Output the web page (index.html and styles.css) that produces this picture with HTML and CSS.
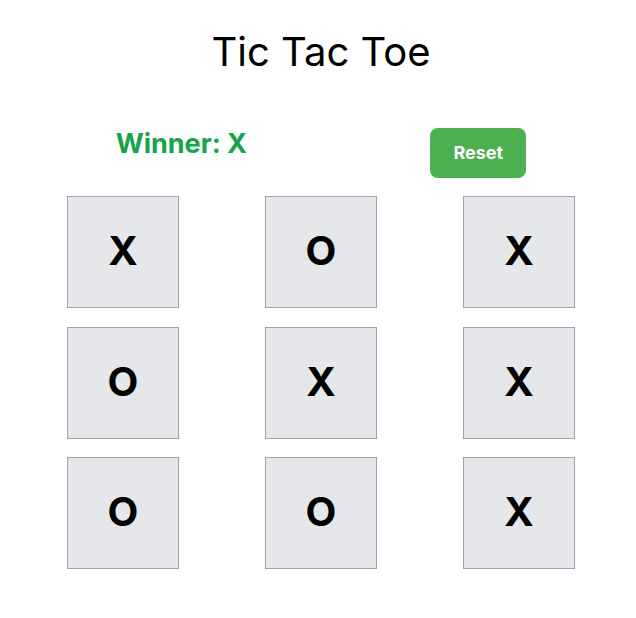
FILE: index.html
```html
<!DOCTYPE html>
<html lang="en">
<head>
<meta charset="utf-8">
<title>Tic Tac Toe</title>
<link rel="stylesheet" href="styles.css">
</head>
<body>
<div class="app">
  <h1 class="title">Tic Tac Toe</h1>
  <div class="status">
    <div class="winner">Winner: X</div>
    <button class="reset">Reset</button>
  </div>
  <div class="board">
    <div class="cell">X</div>
    <div class="cell">O</div>
    <div class="cell">X</div>
    <div class="cell">O</div>
    <div class="cell">X</div>
    <div class="cell">X</div>
    <div class="cell">O</div>
    <div class="cell">O</div>
    <div class="cell">X</div>
  </div>
</div>
</body>
</html>
```
FILE: styles.css
```css
html, body {
  margin: 0;
  padding: 0;
  background: #ffffff;
}
body {
  font-family: Inter, "Liberation Sans", sans-serif;
  color: #000;
}
.app {
  padding: 0 18px 0 24px;
  display: flex;
  flex-direction: column;
}
.title {
  margin: 28px 0 0;
  font-size: 40px;
  font-weight: 400;
  line-height: 48px;
  text-align: center;
}
.status {
  margin-top: 52px;
  display: flex;
  justify-content: space-around;
  align-items: flex-start;
  height: 50px;
}
.winner {
  color: #16a34a;
  font-size: 27px;
  font-weight: 700;
  line-height: 30px;
  margin-top: 1px;
}
.reset {
  width: 96px;
  height: 50px;
  border: none;
  border-radius: 8px;
  background: #4caf50;
  color: #fff;
  font-family: Inter, "Liberation Sans", sans-serif;
  font-size: 18px;
  font-weight: 700;
  padding: 0 0 2px;
}
.board {
  margin-top: 18px;
  display: grid;
  grid-template-columns: repeat(3, 1fr);
  grid-auto-rows: 112px;
  row-gap: 18.67px;
}
.cell {
  justify-self: center;
  width: 112px;
  height: 112px;
  box-sizing: border-box;
  border: 1px solid #9ca3af;
  background: #e5e7eb;
  display: flex;
  align-items: center;
  justify-content: center;
  padding-bottom: 3px;
  font-size: 40px;
  font-weight: 700;
}
```
